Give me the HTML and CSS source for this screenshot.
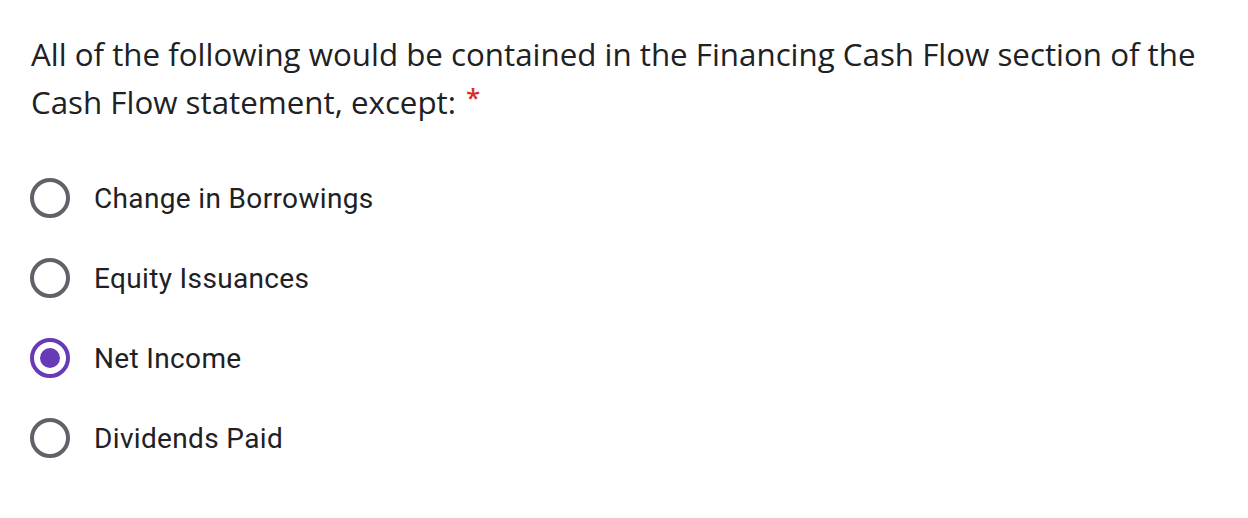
FILE: index.html
```html
<!DOCTYPE html>
<html>
<head>
<meta charset="utf-8">
<link rel="stylesheet" href="styles.css">
</head>
<body>
<div class="question">
  <div class="title">All of the following would be contained in the Financing Cash Flow section of the Cash Flow statement, except:<span class="req">*</span></div>
  <div class="options">
    <label class="opt"><span class="radio"></span><span class="label">Change in Borrowings</span></label>
    <label class="opt"><span class="radio"></span><span class="label">Equity Issuances</span></label>
    <label class="opt"><span class="radio checked"><span class="dot"></span></span><span class="label">Net Income</span></label>
    <label class="opt"><span class="radio"></span><span class="label">Dividends Paid</span></label>
  </div>
</div>
</body>
</html>
```

FILE: styles.css
```css
html, body { margin: 0; padding: 0; background: #fff; }
.question { padding: 30px 20px 0 31px; color: #202124; }
.title {
  font-family: "Open Sans", sans-serif;
  font-size: 31.3px;
  line-height: 48px;
  width: 1200px;
}
.req {
  display: inline-block;
  color: #d93025;
  margin-left: 10px;
  font-size: 26px;
  font-weight: 600;
  line-height: 1;
  vertical-align: 7px;
}
.options { margin-top: 32px; display: flex; flex-direction: column; }
.opt { display: flex; align-items: center; height: 80px; }
.radio {
  box-sizing: border-box;
  width: 40px; height: 40px;
  border: 4px solid #5f6368;
  border-radius: 50%;
  display: flex; align-items: center; justify-content: center;
  flex: none;
  margin-left: -1px;
}
.radio.checked { border-color: #673ab7; }
.dot { width: 20px; height: 20px; border-radius: 50%; background: #673ab7; }
.label {
  margin-left: 24px;
  font-family: Roboto, sans-serif;
  font-size: 28px;
  letter-spacing: 0.35px;
}
```
